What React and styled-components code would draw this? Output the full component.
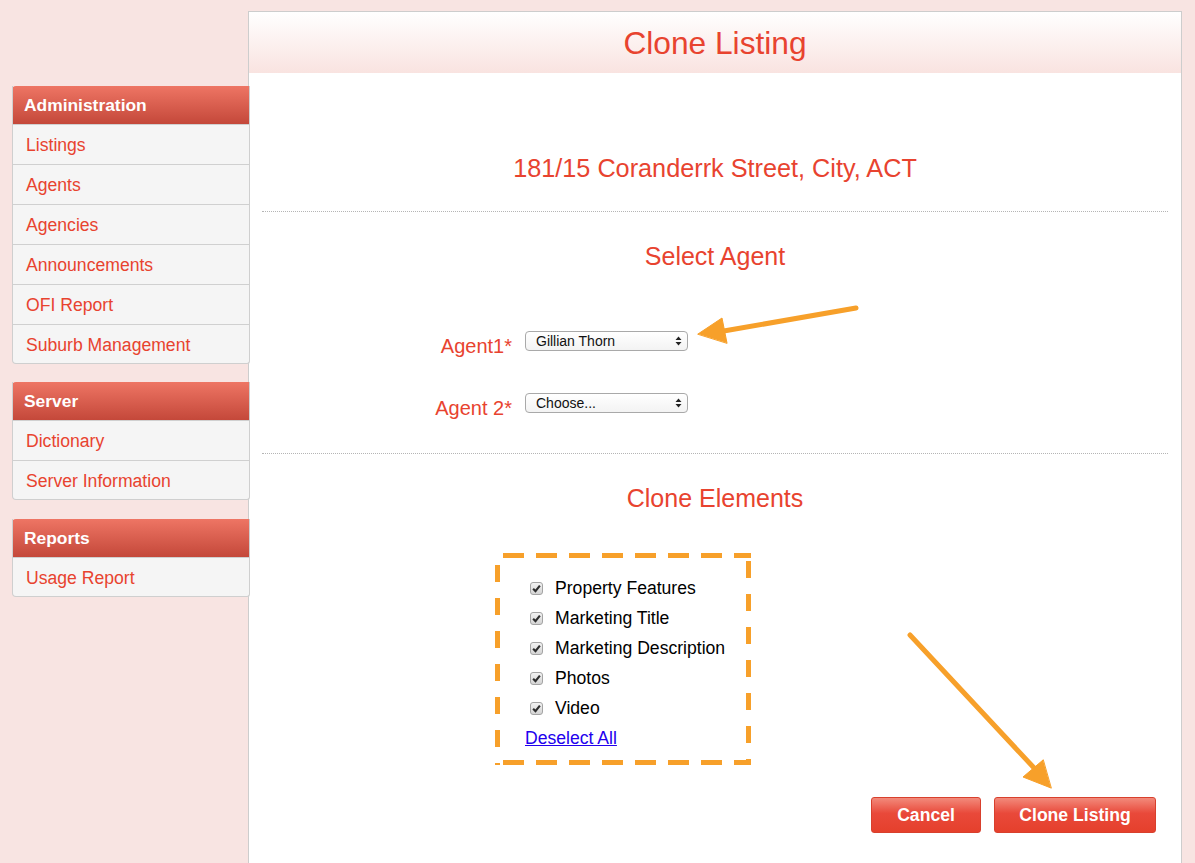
import styled, { createGlobalStyle } from "styled-components";

const GlobalStyle = createGlobalStyle`
  html, body {
    margin: 0;
    padding: 0;
    background: #f8e4e2;
    font-family: "Liberation Sans", Arial, Helvetica, sans-serif;
  }
`;

const RED = "#e8432f";
const ORANGE = "#f7a02a";

const Page = styled.div`
  position: relative;
  display: flex;
  align-items: flex-start;
  padding: 11px 0 0 12px;
  min-height: calc(100vh - 11px);
`;

const Sidebar = styled.div`
  width: 238px;
  margin-top: 75px;
  margin-right: -2px;
  display: flex;
  flex-direction: column;
  gap: 18px;
  position: relative;
  z-index: 1;
`;

const Group = styled.div`
  border: 1px solid #cfcfcf;
  border-top: none;
  border-radius: 0 0 3px 4px;
  overflow: hidden;
  background: #f5f5f5;
  &:last-child {
    margin-top: 1px;
  }
`;

const GroupTitle = styled.div`
  height: 38px;
  line-height: 38px;
  padding-left: 12px;
  margin: 0 -1px 0 -1px;
  border-radius: 4px 0 0 0;
  background: linear-gradient(#ee7564, #c4483a);
  color: #fff;
  font-weight: 700;
  font-size: 17.4px;
`;

const NavItem = styled.a`
  display: block;
  height: 39px;
  line-height: 41px;
  padding-left: 13px;
  color: ${RED};
  font-size: 17.6px;
  text-decoration: none;
  border-top: 1px solid #d0d0d0;
  cursor: pointer;
  &:last-child {
    height: 38px;
  }
`;

const Panel = styled.div`
  width: 932px;
  min-height: calc(100vh - 12px);
  border: 1px solid #cdcdcd;
  border-bottom: none;
  background: #fff;
`;

const PanelHeader = styled.div`
  height: 61px;
  line-height: 63px;
  text-align: center;
  background: linear-gradient(#ffffff, #f9e3e0);
  color: ${RED};
  font-size: 31.7px;
`;

const Content = styled.div`
  padding: 0 13px 0 13px;
`;

const Address = styled.div`
  padding-top: 80px;
  line-height: 30px;
  text-align: center;
  font-size: 25.25px;
  color: ${RED};
`;

const Divider = styled.div`
  border-top: 1px dotted #b5b5b5;
  margin-top: ${(p) => p.$top}px;
`;

const SectionTitle = styled.div`
  margin-top: 29px;
  line-height: 30px;
  text-align: center;
  font-size: 25px;
  color: ${RED};
`;

const FieldRow = styled.div`
  display: flex;
  align-items: flex-start;
  height: 20px;
  margin-top: ${(p) => p.$top}px;
`;

const FieldLabel = styled.label`
  width: 250px;
  margin-right: 13px;
  margin-top: 5px;
  text-align: right;
  font-size: 20px;
  line-height: 20px;
  color: ${RED};
`;

const SelectWrap = styled.div`
  position: relative;
  width: 163px;
  height: 20px;
`;

const Select = styled.select`
  appearance: none;
  width: 100%;
  height: 20px;
  box-sizing: border-box;
  border: 1px solid #a9a9a9;
  border-radius: 4px;
  background: linear-gradient(#ffffff, #f3f3f3);
  padding: 0 0 0 10px;
  font-family: "Liberation Sans", Arial, sans-serif;
  font-size: 14px;
  color: #111;
  outline: none;
`;

const SelectArrows = styled.svg`
  position: absolute;
  right: 6px;
  top: 5px;
  pointer-events: none;
`;

const Elements = styled.div`
  width: 256px;
  height: 212px;
  box-sizing: border-box;
  margin: 40px 0 0 233px;
  padding: 20px 0 0 30px;
  background:
    repeating-linear-gradient(90deg, ${ORANGE} 0 21px, transparent 21px 33px) 8px 0 / 100% 5px no-repeat,
    repeating-linear-gradient(90deg, ${ORANGE} 0 21px, transparent 21px 33px) 8px 100% / 100% 5px no-repeat,
    repeating-linear-gradient(180deg, ${ORANGE} 0 17px, transparent 17px 33px) 0 12px / 5px 100% no-repeat,
    repeating-linear-gradient(180deg, ${ORANGE} 0 17px, transparent 17px 33px) 100% 8px / 5px 100% no-repeat;
`;

const CheckRow = styled.label`
  display: flex;
  align-items: center;
  height: 30px;
  padding-left: 5px;
  font-size: 17.6px;
  color: #000;
`;

const Box = styled.span`
  width: 13px;
  height: 13px;
  box-sizing: border-box;
  margin-right: 12px;
  border: 1px solid #a4a4a4;
  border-radius: 3px;
  background: linear-gradient(#f2f2f2, #d4d4d4);
  display: flex;
  align-items: center;
  justify-content: center;
`;

const Deselect = styled.a`
  display: block;
  line-height: 31px;
  font-size: 17.6px;
  color: #2200ee;
  text-decoration: underline;
  cursor: pointer;
`;

const Actions = styled.div`
  display: flex;
  justify-content: flex-end;
  gap: 13px;
  margin: 32px 12px 0 0;
  padding-bottom: 30px;
`;

const Button = styled.button`
  width: ${(p) => p.$w}px;
  height: 36px;
  border: 1px solid #d8402d;
  border-radius: 3px;
  background: linear-gradient(#f28a7b, #e9493a 45%, #e5402c);
  color: #fff;
  font-family: "Liberation Sans", Arial, sans-serif;
  font-weight: 700;
  font-size: 17.6px;
  cursor: pointer;
`;

const Overlay = styled.svg`
  position: absolute;
  left: 0;
  top: 0;
  pointer-events: none;
  z-index: 2;
`;

const nav = [
  { title: "Administration", items: ["Listings", "Agents", "Agencies", "Announcements", "OFI Report", "Suburb Management"] },
  { title: "Server", items: ["Dictionary", "Server Information"] },
  { title: "Reports", items: ["Usage Report"] },
];

const elements = ["Property Features", "Marketing Title", "Marketing Description", "Photos", "Video"];

function Arrows() {
  return (
    <SelectArrows width="7" height="10" viewBox="0 0 7 10">
      <path d="M3.5 0.5 L6.5 4 L0.5 4 Z M0.5 6 L6.5 6 L3.5 9.5 Z" fill="#222" />
    </SelectArrows>
  );
}

function Check() {
  return (
    <svg width="9" height="9" viewBox="0 0 8 8">
      <path d="M1 4.2 L3.1 6.3 L7 1.4" fill="none" stroke="#2e2e2e" strokeWidth="1.9" />
    </svg>
  );
}

export default function App() {
  return (
    <>
      <GlobalStyle />
      <Page>
        <Sidebar>
          {nav.map((group) => (
            <Group key={group.title}>
              <GroupTitle>{group.title}</GroupTitle>
              {group.items.map((item) => (
                <NavItem key={item}>{item}</NavItem>
              ))}
            </Group>
          ))}
        </Sidebar>
        <Panel>
          <PanelHeader>Clone Listing</PanelHeader>
          <Content>
            <Address>181/15 Coranderrk Street, City, ACT</Address>
            <Divider $top={28} />
            <SectionTitle>Select Agent</SectionTitle>
            <FieldRow $top={60}>
              <FieldLabel>Agent1*</FieldLabel>
              <SelectWrap>
                <Select defaultValue="gillian">
                  <option value="gillian">Gillian Thorn</option>
                </Select>
                <Arrows />
              </SelectWrap>
            </FieldRow>
            <FieldRow $top={42}>
              <FieldLabel>Agent 2*</FieldLabel>
              <SelectWrap>
                <Select defaultValue="">
                  <option value="">Choose...</option>
                </Select>
                <Arrows />
              </SelectWrap>
            </FieldRow>
            <Divider $top={40} />
            <SectionTitle>Clone Elements</SectionTitle>
            <Elements>
              {elements.map((el) => (
                <CheckRow key={el}>
                  <Box>
                    <Check />
                  </Box>
                  {el}
                </CheckRow>
              ))}
              <Deselect>Deselect All</Deselect>
            </Elements>
            <Actions>
              <Button $w={110}>Cancel</Button>
              <Button $w={162}>Clone Listing</Button>
            </Actions>
          </Content>
        </Panel>
        <Overlay width="1195" height="863" viewBox="0 0 1195 863">
          <g fill={ORANGE} stroke={ORANGE} strokeLinecap="round">
            <line x1="856" y1="308" x2="718" y2="332" strokeWidth="5" />
            <polygon points="698,334 722,318 727,343" strokeWidth="1" strokeLinejoin="round" />
            <line x1="910" y1="635" x2="1036" y2="770" strokeWidth="5" />
            <polygon points="1051,788 1023,777 1043,760" strokeWidth="1" strokeLinejoin="round" />
          </g>
        </Overlay>
      </Page>
    </>
  );
}
